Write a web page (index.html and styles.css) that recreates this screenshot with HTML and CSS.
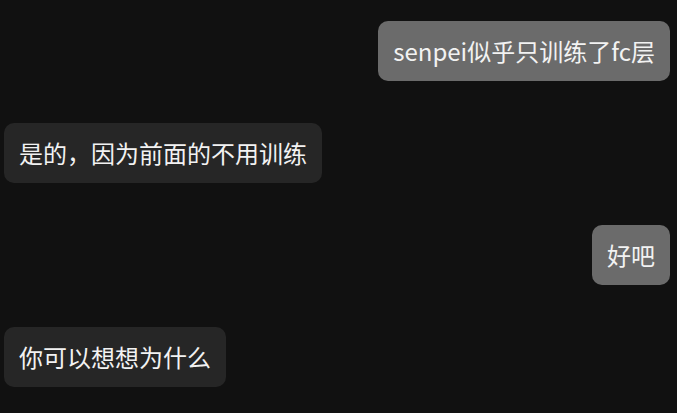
FILE: index.html
```html
<!DOCTYPE html>
<html lang="zh">
<head>
<meta charset="utf-8">
<link rel="stylesheet" href="styles.css">
</head>
<body>
<div class="chat">
  <div class="msg me">senpei似乎只训练了fc层</div>
  <div class="msg other">是的，因为前面的不用训练</div>
  <div class="msg me">好吧</div>
  <div class="msg other">你可以想想为什么</div>
</div>
</body>
</html>
```
FILE: styles.css
```css
html, body {
  margin: 0;
  padding: 0;
  background: #111111;
  height: 100%;
  overflow: hidden;
}
.chat {
  display: flex;
  flex-direction: column;
  gap: 42px;
  padding: 21px 7px 0 4px;
  font-family: "Noto Sans CJK SC", "Noto Sans", sans-serif;
  font-size: 24px;
  line-height: 32px;
  color: #f2f2f2;
}
.msg {
  padding: 14px 15px;
  border-radius: 10px;
  white-space: nowrap;
}
.me {
  align-self: flex-end;
  background: #6b6b6b;
}
.other {
  align-self: flex-start;
  background: #262626;
}
```
